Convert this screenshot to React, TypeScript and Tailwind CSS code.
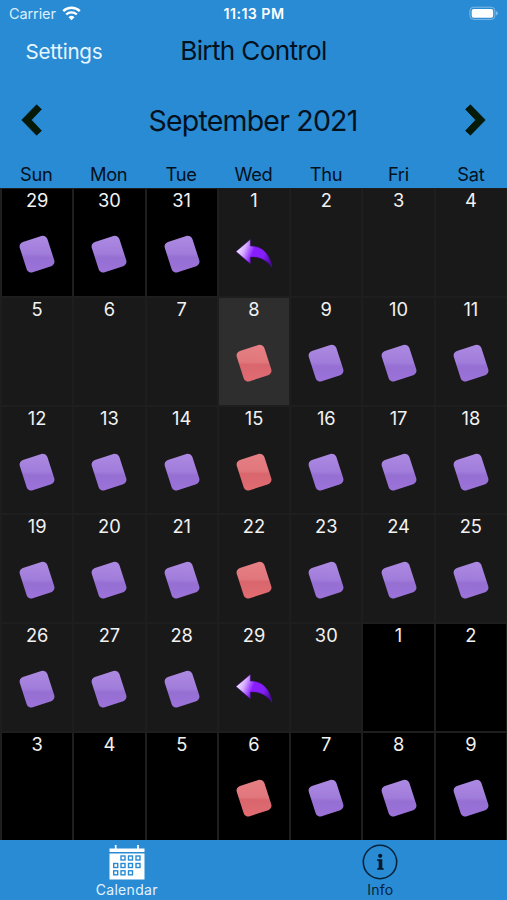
import React from "react";

const weekdays = ["Sun", "Mon", "Tue", "Wed", "Thu", "Fri", "Sat"];

// p = purple pill, r = red pill, a = arrow
const weeks = [
  { days: [29, 30, 31, 1, 2, 3, 4], marks: "pppa---" },
  { days: [5, 6, 7, 8, 9, 10, 11], marks: "---rppp" },
  { days: [12, 13, 14, 15, 16, 17, 18], marks: "ppprppp" },
  { days: [19, 20, 21, 22, 23, 24, 25], marks: "ppprppp" },
  { days: [26, 27, 28, 29, 30, 1, 2], marks: "pppa---" },
  { days: [3, 4, 5, 6, 7, 8, 9], marks: "---rppp" },
];

const isOtherMonth = (week: number, day: number) =>
  (week === 0 && day > 20) || (week >= 4 && day < 10);

function Gradients() {
  return (
    <svg className="absolute h-0 w-0" aria-hidden="true">
      <defs>
        <linearGradient id="purple" x1="0" y1="0" x2="0" y2="1" gradientTransform="rotate(17 .5 .5)">
          <stop offset="0" stopColor="#ab88e0" />
          <stop offset="0.48" stopColor="#a17ddb" />
          <stop offset="0.6" stopColor="#966fd3" />
          <stop offset="1" stopColor="#9a72d8" />
        </linearGradient>
        <linearGradient id="red" x1="0" y1="0" x2="0" y2="1" gradientTransform="rotate(17 .5 .5)">
          <stop offset="0" stopColor="#e57f83" />
          <stop offset="0.47" stopColor="#e0777c" />
          <stop offset="0.55" stopColor="#d9666d" />
          <stop offset="1" stopColor="#e06c72" />
        </linearGradient>
        <linearGradient id="arrow" x1="0" y1="0.4" x2="1" y2="0.7">
          <stop offset="0" stopColor="#f3e6ff" />
          <stop offset="0.2" stopColor="#d7adff" />
          <stop offset="0.45" stopColor="#8a1cff" />
          <stop offset="0.75" stopColor="#8420f5" />
          <stop offset="1" stopColor="#4a0aa0" />
        </linearGradient>
      </defs>
    </svg>
  );
}

function Mark({ type }: { type: string }) {
  if (type === "p" || type === "r") {
    return (
      <svg width="40" height="40" viewBox="0 0 40 40">
        <rect
          x="5.5"
          y="4.2"
          width="29"
          height="31.8"
          rx="4.8"
          transform="rotate(-18 20 20)"
          fill={type === "p" ? "url(#purple)" : "url(#red)"}
        />
      </svg>
    );
  }
  if (type === "a") {
    return (
      <svg width="40" height="40" viewBox="0 0 40 40">
        <path
          d="M2 17.500 16.300 5.500V12C27 11.800 36 18.500 38 33.500C33.500 26.500 26 22.500 16.300 23V29.800Z"
          fill="url(#arrow)"
          stroke="#4a0f90"
          strokeWidth="0.5"
        />
      </svg>
    );
  }
  return null;
}

function StatusBar() {
  return (
    <div className="grid h-[27px] grid-cols-3 items-center px-[9px] text-white">
      <div className="flex items-center gap-[6px]">
        <span className="text-[14.5px] tracking-[-0.1px] text-[#d8f0ff]">Carrier</span>
        <svg width="19" height="15" viewBox="0 0 19 15" fill="none" stroke="white">
          <path d="M1.2 5.2a12 12 0 0 1 16.6 0" strokeWidth="2.5" />
          <path d="M4.2 8.5a7.6 7.6 0 0 1 10.6 0" strokeWidth="2.3" />
          <path d="M9.5 14.3 6.5 11.2a4.4 4.4 0 0 1 6 0Z" fill="white" stroke="none" />
        </svg>
      </div>
      <span className="whitespace-nowrap pl-[1px] text-center text-[14.2px] font-semibold tracking-[0.45px]">
        11:13 PM
      </span>
      <svg className="ml-auto" width="30" height="15" viewBox="0 0 31 15">
        <rect x="2" y="1" width="25.8" height="12.6" rx="3.8" fill="none" stroke="#83bce8" />
        <rect x="3.8" y="2.8" width="22.2" height="9" rx="2" fill="white" />
        <path d="M29 5v4.6q2-.8 2-2.3t-2-2.3" fill="#83bce8" />
      </svg>
    </div>
  );
}

function Chevron({ flip }: { flip?: boolean }) {
  return (
    <svg
      className={flip ? "-scale-x-100" : ""}
      width="21"
      height="32"
      viewBox="0 0 21 32"
      fill="#071a08"
      stroke="#02100c"
      strokeWidth="0.7"
    >
      <path d="M.8 16 15.6.8 20.4 5.3 10.3 16 20.4 26.7 15.6 31.2Z" />
    </svg>
  );
}

function TabBar() {
  return (
    <div className="grid h-[60px] grid-cols-2 bg-[#298bd3]">
      <div className="flex flex-col items-center pt-[4px] text-[#e2f4ff]">
        <svg width="36" height="36" viewBox="0 0 36 36">
          <path d="M.5 4.5h35V8H.5zM.5 9.5h35V35.5H.5z" fill="white" />
          <path d="M6.7 1v5M29 1v5" stroke="white" strokeWidth="1.7" />
          <g fill="white" stroke="#298bd3" strokeWidth="1.4">
            {[12, 19.5, 27].map((x) => (
              <rect key={x} x={x} y="12" width="4" height="4" />
            ))}
            {[4.7, 12, 19.5, 27].map((x) => (
              <rect key={x} x={x} y="19.5" width="4" height="4" />
            ))}
            {[4.7, 12, 19.5].map((x) => (
              <rect key={x} x={x} y="26.8" width="4" height="4" />
            ))}
          </g>
        </svg>
        <span className="mt-[1px] text-[14px] leading-[18px] tracking-[0.3px]">Calendar</span>
      </div>
      <div className="flex flex-col items-center pt-[4px] text-[#06233c]">
        <svg width="36" height="36" viewBox="0 0 36 36">
          <circle cx="18" cy="18" r="16.7" fill="none" stroke="#06233c" strokeWidth="1.6" />
          <circle cx="18.2" cy="11.8" r="2.1" fill="#03192c" />
          <path
            d="M15 15.2h5.3v8.6l1.4.8v1.2h-6.5v-1.2l1.5-.8v-6.6l-1.7-.7z"
            fill="#03192c"
          />
        </svg>
        <span className="mt-[1px] text-[14px] leading-[18px] tracking-[0.2px]">Info</span>
      </div>
    </div>
  );
}

function App() {
  return (
    <div className="flex h-[900px] w-[507px] flex-col overflow-hidden bg-[#1e1e1e] font-['Inter','Liberation_Sans',sans-serif]">
      <Gradients />
      <header className="h-[188px] bg-[#298bd3] text-[#03111d]">
        <StatusBar />
        <div className="grid h-[50px] grid-cols-[1fr_auto_1fr] items-center">
          <span className="pl-[25.5px] pt-[1px] text-[20.6px] tracking-[-0.25px] text-[#e6f6ff]">
            Settings
          </span>
          <h1 className="pb-[3px] text-[26.2px] tracking-[-0.7px]">Birth Control</h1>
        </div>
        <div className="flex h-[86px] items-center justify-between px-[21px]">
          <Chevron />
          <h2 className="pr-[1px] pt-[2px] text-[28.5px] tracking-[-0.8px]">September 2021</h2>
          <Chevron flip />
        </div>
        <div className="grid grid-cols-7 text-center text-[18.3px] leading-[23px] tracking-[-0.3px]">
          {weekdays.map((name) => (
            <span key={name}>{name}</span>
          ))}
        </div>
      </header>
      <main className="grid flex-1 grid-cols-7 grid-rows-6 gap-[2px] pb-[0.5px] pl-[2px] pr-[1px] pt-[1px]">
        {weeks.map((week, w) =>
          week.days.map((day, d) => (
            <div
              key={`${w}-${d}`}
              className={`flex flex-col items-center text-[#f2f2f2] ${
                isOtherMonth(w, day)
                  ? "bg-black"
                  : w === 1 && day === 8
                  ? "bg-[#2e2e2e]"
                  : "bg-[#191919]"
              }`}
            >
              <span className="text-[18.3px] leading-[23px]">{day}</span>
              <div className="mt-[22px]">
                <Mark type={week.marks[d]} />
              </div>
            </div>
          ))
        )}
      </main>
      <TabBar />
    </div>
  );
}

export default App;
